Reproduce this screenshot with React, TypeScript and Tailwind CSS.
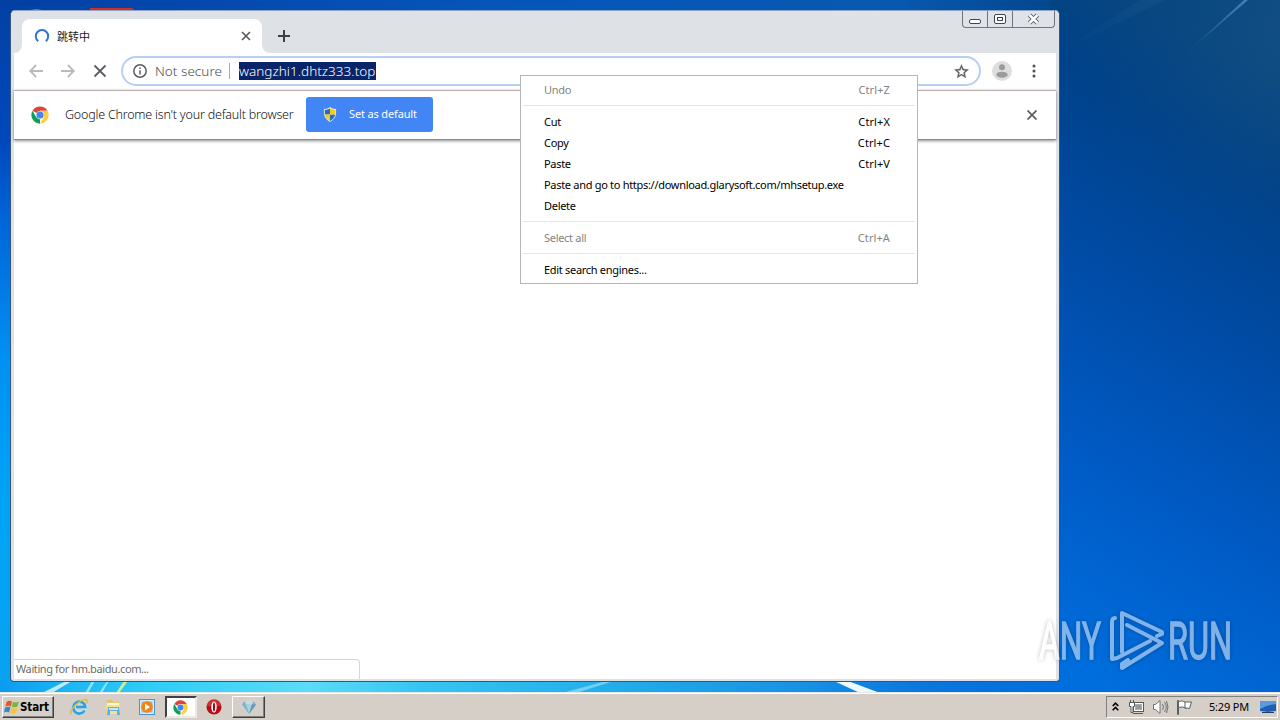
interface MenuEntry {
    label: string;
    shortcut?: string;
    disabled?: boolean;
}

const menuGroups: MenuEntry[][] = [
    [{ label: 'Undo', shortcut: 'Ctrl+Z', disabled: true }],
    [
        { label: 'Cut', shortcut: 'Ctrl+X' },
        { label: 'Copy', shortcut: 'Ctrl+C' },
        { label: 'Paste', shortcut: 'Ctrl+V' },
        { label: 'Paste and go to https://download.glarysoft.com/mhsetup.exe' },
        { label: 'Delete' },
    ],
    [{ label: 'Select all', shortcut: 'Ctrl+A', disabled: true }],
    [{ label: 'Edit search engines...' }],
];

function ChromeLogo({ className }: { className?: string }) {
    return (
        <svg viewBox="0 0 48 48" className={className}>
            <circle cx="24" cy="24" r="23" fill="#fff" />
            <path d="M24 24 4.1 12.5A23 23 0 0 1 43.9 12.5H24Z" fill="#db4437" />
            <path d="M4.1 12.5 14 29.8 24 35.5 24 47A23 23 0 0 1 4.1 12.5Z" fill="#0f9d58" />
            <path d="M43.9 12.5A23 23 0 0 1 24 47L34 29.8 24 12.5Z" fill="#ffcd40" />
            <circle cx="24" cy="24" r="11" fill="#f1f1f1" />
            <circle cx="24" cy="24" r="9.5" fill="#4285f4" />
        </svg>
    );
}

function Wallpaper() {
    return (
        <svg
            viewBox="0 0 1280 720"
            className="absolute inset-0 h-full w-full"
            preserveAspectRatio="none"
        >
            <defs>
                <linearGradient id="left" x1="0" y1="0" x2="0" y2="1">
                    <stop offset="0" stopColor="#0340a4" />
                    <stop offset="0.2" stopColor="#0049bd" />
                    <stop offset="0.32" stopColor="#0068dc" />
                    <stop offset="0.5" stopColor="#0091f2" />
                    <stop offset="0.7" stopColor="#00a4f5" />
                    <stop offset="1" stopColor="#0aa2ee" />
                </linearGradient>
                <linearGradient id="top" x1="0" y1="0" x2="1" y2="0">
                    <stop offset="0" stopColor="#0340a4" />
                    <stop offset="0.4" stopColor="#0556bc" />
                    <stop offset="0.7" stopColor="#0759b0" />
                    <stop offset="0.82" stopColor="#03478f" />
                    <stop offset="1" stopColor="#0c4885" />
                </linearGradient>
                <linearGradient id="right" x1="1060" y1="660" x2="1370" y2="140" gradientUnits="userSpaceOnUse">
                    <stop offset="0" stopColor="#006edd" />
                    <stop offset="0.3" stopColor="#005bc6" />
                    <stop offset="0.6" stopColor="#004ba5" />
                    <stop offset="0.85" stopColor="#00428a" />
                    <stop offset="1" stopColor="#06457f" />
                </linearGradient>
                <radialGradient id="glow" cx="1300" cy="30" r="230" gradientUnits="userSpaceOnUse">
                    <stop offset="0" stopColor="#1c5685" stopOpacity="0.6" />
                    <stop offset="1" stopColor="#0c4885" stopOpacity="0" />
                </radialGradient>
                <linearGradient id="bottom" x1="0" y1="0" x2="1" y2="0">
                    <stop offset="0" stopColor="#0a9cf0" />
                    <stop offset="0.06" stopColor="#1cb4f4" />
                    <stop offset="0.14" stopColor="#2ecdf6" />
                    <stop offset="0.29" stopColor="#5bdcf8" />
                    <stop offset="0.4" stopColor="#35c4f2" />
                    <stop offset="0.58" stopColor="#22adea" />
                    <stop offset="0.76" stopColor="#1791e4" />
                    <stop offset="0.86" stopColor="#0b78df" />
                    <stop offset="1" stopColor="#006edd" />
                </linearGradient>
                <linearGradient id="ray" x1="0" y1="1" x2="1" y2="0">
                    <stop offset="0" stopColor="#6aa3d8" stopOpacity="0" />
                    <stop offset="1" stopColor="#6aa3d8" stopOpacity="0.6" />
                </linearGradient>
            </defs>
            <rect width="1280" height="720" fill="url(#top)" />
            <rect y="0" width="40" height="720" fill="url(#left)" />
            <rect x="1050" y="0" width="230" height="720" fill="url(#right)" />
            <rect x="1050" y="0" width="230" height="300" fill="url(#glow)" />
            <path d="M1183 56 1244 0H1248Z" fill="url(#ray)" />
            <path d="M1060 52 1140 0H1165Z" fill="url(#ray)" opacity="0.12" />
            <rect y="680" width="1060" height="14" fill="url(#bottom)" />
            <path d="M42 693 66 681H72L52 693Z" fill="#d9f4ff" opacity="0.85" />
            <path d="M85 693 92 681H95L88 693ZM99 693 107 681H109L102 693Z" fill="#8fe2ff" />
            <path d="M116 693 124 681H128L119 693Z" fill="#c9f08f" />
            <path d="M562 693 606 681H614L576 693Z" fill="#bdefff" opacity="0.5" />
            <path d="M834 681H848L880 693H860Z" fill="#ecfaff" />
            <path d="M24 11Q36 8 49 11Z" fill="#aec3e5" />
            <path d="M90 8H132L134 10V12H90Z" fill="#d22c2b" />
        </svg>
    );
}

function WindowControls() {
    return (
        <div className="flex h-[17px] w-[93px] overflow-hidden rounded-b-[4px] border border-t-0 border-[#70757d] bg-[#e0e2e9]">
            <div className="w-[25px] border-r border-[#70757d]">
                <svg viewBox="0 0 24 16" className="h-4 w-6" fill="#fff" stroke="#41444f">
                    <rect x="6.5" y="8.5" width="11" height="4" rx="1.5" />
                </svg>
            </div>
            <div className="w-[25px] border-r border-[#70757d]">
                <svg viewBox="0 0 24 16" className="h-4 w-6" fill="#fff" stroke="#41444f">
                    <rect x="6.5" y="3.5" width="11" height="9" rx="1.5" />
                    <rect x="9.5" y="6.5" width="5" height="3" />
                </svg>
            </div>
            <div className="flex-1">
                <svg viewBox="0 0 41 16" className="h-4 w-[41px]" fill="none">
                    <path d="m16.5 4 8 8m0-8-8 8" stroke="#50535e" strokeWidth="4.4" />
                    <path d="m16.5 4 8 8m0-8-8 8" stroke="#fff" strokeWidth="2.6" />
                </svg>
            </div>
        </div>
    );
}

function TabStrip() {
    return (
        <div className="flex h-[42px] items-end bg-[#dee1e6] pl-[3px]">
            <svg viewBox="0 0 8 8" className="h-2 w-2 fill-white">
                <path d="M8 0V8H0A8 8 0 0 0 8 0Z" />
            </svg>
            <div className="flex h-[34px] w-[240px] items-center rounded-t-lg bg-white pr-[11px] pl-3">
                <svg viewBox="0 0 16 16" className="h-4 w-4" fill="none">
                    <path d="M4.2 13.1A6.2 6.2 0 1 1 11.8 13.1" stroke="#2b76d2" strokeWidth="2" />
                </svg>
                <span className="ml-[7px] flex-1 font-['Noto_Sans_CJK_SC',sans-serif] text-[11px] text-[#222]">
                    跳转中
                </span>
                <svg viewBox="0 0 10 10" className="h-[10px] w-[10px]" fill="none">
                    <path d="m1 1 8 8m0-8-8 8" stroke="#5a5d61" strokeWidth="1.7" />
                </svg>
            </div>
            <svg viewBox="0 0 8 8" className="h-2 w-2 fill-white">
                <path d="M0 0V8H8A8 8 0 0 1 0 0Z" />
            </svg>
            <svg viewBox="0 0 12 12" className="mb-[11px] ml-2 h-3 w-3" fill="none">
                <path d="M6 0V12M0 6H12" stroke="#3c4043" strokeWidth="2" />
            </svg>
            <div className="ml-auto self-start pr-1">
                <WindowControls />
            </div>
        </div>
    );
}

function Toolbar() {
    return (
        <div className="flex h-[37px] items-center bg-white pr-[17px] pb-px pl-[15px]">
            <div className="flex gap-[18px]">
                <svg viewBox="0 0 14 14" className="h-[14px] w-[14px]" fill="none" stroke="#b8babd" strokeWidth="1.8">
                    <path d="M14 7H1.5M7.2 1 1.2 7l6 6" />
                </svg>
                <svg viewBox="0 0 14 14" className="h-[14px] w-[14px]" fill="none" stroke="#b8babd" strokeWidth="1.8">
                    <path d="M0 7H12.5M6.8 1l6 6-6 6" />
                </svg>
                <svg viewBox="0 0 14 14" className="h-[14px] w-[14px]" fill="none" stroke="#5a5d61" strokeWidth="1.8">
                    <path d="m1.5 1.5 11 11m0-11-11 11" />
                </svg>
            </div>
            <div className="ml-[14px] flex h-[30px] w-[860px] items-center rounded-full border-2 border-[#b9cef3] bg-white pr-[9px] pl-[10px] text-[13.5px]">
                <svg viewBox="0 0 14 14" className="h-[14px] w-[14px]" fill="none" stroke="#5a5d61">
                    <circle cx="7" cy="7" r="6.2" strokeWidth="1.5" />
                    <path d="M7 6.2V10.5M7 3.4V5" strokeWidth="1.5" />
                </svg>
                <span className="ml-2 w-[68px] font-light tracking-[0.03px] whitespace-nowrap text-[#4b4e52]">
                    Not secure
                </span>
                <span className="ml-[6px] h-4 w-px bg-[#a6a9ae]" />
                <span className="ml-[9px] h-[18px] w-[137px] bg-[#0a246a] leading-[18px] font-light tracking-[0.03px] text-white">
                    wangzhi1.dhtz333.top
                </span>
                <svg viewBox="0 0 24 24" className="ml-auto h-[17px] w-[17px] fill-[#5a5d61]">
                    <path
                        d="m22 9.24-7.19-.62L12 2 9.19 8.63 2 9.24l5.46 4.73L5.82 21 12 17.27 18.18 21l-1.63-7.03L22 9.24ZM12 15.4l-3.76 2.27 1-4.28-3.32-2.88 4.38-.38L12 6.1l1.71 4.04 4.38.38-3.32 2.88 1 4.28L12 15.4Z"
                        stroke="#5a5d61"
                        strokeWidth="0.4"
                    />
                </svg>
            </div>
            <svg viewBox="0 0 20 20" className="ml-[11px] h-5 w-5">
                <circle cx="10" cy="10" r="10" fill="#dedede" />
                <circle cx="10" cy="6.3" r="3" fill="#9b9b9b" />
                <ellipse cx="10" cy="13.7" rx="5.7" ry="3" fill="#9b9b9b" />
            </svg>
            <svg viewBox="0 0 4 14" className="ml-5 h-[14px] w-1 fill-[#4e5154]">
                <circle cx="2" cy="2" r="1.5" />
                <circle cx="2" cy="7" r="1.5" />
                <circle cx="2" cy="12" r="1.5" />
            </svg>
        </div>
    );
}

function InfoBar() {
    return (
        <div className="flex h-[50px] items-center border-t border-b border-t-[#b6aeac] border-b-[#8b8b8b] bg-white pr-[19px] pb-px pl-[17px] shadow-[0_1px_3px_rgba(0,0,0,0.45)]">
            <ChromeLogo className="h-[18px] w-[18px]" />
            <span className="mt-px ml-[16px] w-[230px] text-[12.5px] font-light tracking-[-0.21px] whitespace-nowrap text-[#111]">
                Google Chrome isn't your default browser
            </span>
            <button className="ml-[11px] flex h-[35px] w-[127px] items-center rounded-[3px] bg-[#4285f4] pl-[17px] text-[11px] text-white">
                <svg viewBox="0 0 14 16" className="h-[15px] w-[14px]">
                    <path d="M7 0Q9 2 13.5 2.2V7Q13 13 7 16 1 13 .5 7V2.2Q5 2 7 0Z" fill="#e9e5ce" />
                    <path d="M7 1.5V8H1.5V3.2Q5 3 7 1.5ZM7 8h5.5Q11.5 12.5 7 14.8Z" fill="#1f6fc2" />
                    <path d="M7 1.5Q9 3 12.5 3.2V8H7ZM1.5 8H7v6.8Q2.5 12.5 1.5 8Z" fill="#fcc71f" />
                </svg>
                <span className="ml-3 tracking-[-0.15px] whitespace-nowrap">Set as default</span>
            </button>
            <svg viewBox="0 0 10 10" className="ml-auto h-[10px] w-[10px]" fill="none">
                <path d="m.5.5 9 9m0-9-9 9" stroke="#5f6266" strokeWidth="1.8" />
            </svg>
        </div>
    );
}

function ContextMenu() {
    return (
        <div className="absolute top-[75px] left-[520px] h-[209px] w-[398px] border border-[#b4b6b9] bg-white pt-1 text-[11px] text-black">
            {menuGroups.map((group, i) => (
                <div
                    key={i}
                    className="mx-[2px] mb-[6px] border-b border-[#e6e6e6] pb-[4px] last:border-b-0"
                >
                    {group.map((item) => (
                        <div
                            key={item.label}
                            className={`flex h-[21px] items-center justify-between pr-[25px] pl-[21px] whitespace-nowrap ${
                                item.disabled ? 'text-[#838383]' : ''
                            }`}
                        >
                            <span className="tracking-[-0.3px]">{item.label}</span>
                            <span className="tracking-[0.1px]">{item.shortcut}</span>
                        </div>
                    ))}
                </div>
            ))}
        </div>
    );
}

function BrowserWindow() {
    return (
        <div className="absolute top-[10px] left-[10px] flex h-[672px] w-[1050px] flex-col rounded-t-[5px] rounded-b-[4px] border border-[#35577c] border-t-[#8fa5c4] bg-[#dee1e6]">
            <div className="overflow-hidden rounded-t-[4px]">
                <TabStrip />
            </div>
            <div className="mx-[3px] mb-[2px] flex flex-1 flex-col bg-white">
                <Toolbar />
                <InfoBar />
                <div className="mt-auto flex h-5 w-[346px] items-center rounded-tr-[4px] border-t border-r border-[#d5d6d9] pl-[2px] text-[11px] tracking-[-0.4px] text-[#6b6b6b]">
                    <span>Waiting for hm.baidu.com...</span>
                </div>
            </div>
        </div>
    );
}

function Watermark() {
    return (
        <div className="absolute top-[608px] left-[1038px] flex h-[66px] w-[242px] items-center text-white opacity-50 drop-shadow-[0_0_2px_rgba(0,0,0,0.5)]">
            <svg viewBox="0 0 242 66" className="h-full w-full overflow-visible">
                <g
                    fill="currentColor"
                    stroke="currentColor"
                    strokeWidth="1.3"
                    fontFamily="Roboto, sans-serif"
                    fontSize="51"
                >
                    <text x="1" y="51" textLength="62" lengthAdjust="spacingAndGlyphs">
                        ANY
                    </text>
                    <text x="130" y="51" textLength="64" lengthAdjust="spacingAndGlyphs">
                        RUN
                    </text>
                </g>
                {/* Two interlocking play triangles */}
                <g fill="none" stroke="currentColor" strokeWidth="4" strokeLinejoin="round" strokeLinecap="round">
                    <path d="M77 10Q74 10 74 14V51L79 50 112 33" />
                    <path d="M84 44V5L124 24V26L119 28" />
                    <path d="M89 17 124 35 84 60V56L90 52" />
                </g>
            </svg>
        </div>
    );
}

function StartButton() {
    return (
        <button className="flex h-[22px] w-[52px] items-center border border-t-white border-r-[#404040] border-b-[#404040] border-l-white pl-px shadow-[inset_-1px_-1px_0_#808080]">
            <svg viewBox="0 0 16 16" className="h-4 w-4">
                <path d="M2.5 3Q5 1 8 2.5L6.8 7.5Q4 6 1.3 7.8Z" fill="#e7562a" />
                <path d="M9 2.8Q12 4.2 15 2.5L13.5 7.5Q10.5 9 7.8 7.8Z" fill="#73b843" />
                <path d="M1 8.8Q4 7 6.5 8.5L5 13.5Q2.5 12 0 13.5Z" fill="#3d82d2" />
                <path d="M7.5 8.9Q10.5 10.2 13.2 8.7L12 13.5Q9 15.5 6.2 13.8Z" fill="#f6c530" />
            </svg>
            <span className="mt-px font-['DejaVu_Sans_Condensed','DejaVu_Sans',sans-serif] text-[11.5px] font-bold tracking-[-0.1px] text-black">
                Start
            </span>
        </button>
    );
}

function Taskbar() {
    return (
        <div className="absolute inset-x-0 bottom-0 flex h-7 items-center border-t border-[#e9e7e4] bg-[#d5cfc8] pt-[3px] pb-[2px] pl-[2px] shadow-[inset_0_1px_0_#fff]">
            <StartButton />
            {/* Internet Explorer */}
            <svg viewBox="0 0 18 18" className="ml-4 h-[18px] w-[18px]" fill="none">
                <circle cx="9.5" cy="9.5" r="5.5" stroke="#b3e4fa" strokeWidth="4.5" />
                <path d="M14.5 12.5A6 6 0 1 1 15.2 9H6" stroke="#369fda" strokeWidth="2.6" />
                <path d="M1.2 16.2Q-.5 13 5 7.5 12 1 16 1.5 18 2.5 16.5 5.5" stroke="#e2b83b" strokeWidth="1.4" />
            </svg>
            {/* Explorer folder */}
            <svg viewBox="0 0 18 18" className="ml-4 h-[18px] w-[18px]">
                <path d="M3 2h5l1 2h6v12H2Z" fill="#e2c56b" />
                <path d="M3 5h12v3H3Z" fill="#fff8cf" />
                <path d="M2 7h14l-.5 9H2.5Z" fill="#f5df93" />
                <path d="M4 9h11l1 8h-3v-4H6v4H3Z" fill="#5fb0dc" />
                <path d="M5 10h9v2H5Z" fill="#c2e8f7" />
            </svg>
            {/* Media player */}
            <svg viewBox="0 0 16 16" className="ml-[17px] h-4 w-4">
                <rect x=".5" y=".5" width="15" height="15" fill="#d9edfa" stroke="#4b94c9" />
                <rect x="2.5" y="2.5" width="11" height="11" fill="#87bde5" />
                <circle cx="8" cy="8" r="5.8" fill="#f58213" />
                <path d="m6 4.5 5 3.5-5 3.5Z" fill="#fff" />
            </svg>
            <div className="ml-[10px] flex h-[22px] w-8 items-center justify-center border-2 border-t-[#404040] border-r-[#eceae6] border-b-[#eceae6] border-l-[#404040] bg-white">
                <ChromeLogo className="mr-px h-[15px] w-[15px]" />
            </div>
            {/* Opera */}
            <svg viewBox="0 0 16 16" className="ml-[9px] h-4 w-4">
                <circle cx="8" cy="8" r="7.5" fill="#b40f18" />
                <path d="M1 7A7 7 0 0 1 15 7Z" fill="#d64b4b" opacity="0.6" />
                <ellipse cx="8" cy="8" rx="2.7" ry="5.6" fill="#fff" />
                <ellipse cx="8" cy="8" rx="1.1" ry="4.6" fill="#9a0a12" />
            </svg>
            <div className="ml-[10px] flex h-[22px] w-[33px] items-center justify-center border border-t-white border-r-[#404040] border-b-[#404040] border-l-white shadow-[inset_-1px_-1px_0_#808080]">
                <svg viewBox="0 0 14 14" className="h-[14px] w-[14px]">
                    <path d="M2.5 1h9L14 4.5 7 14 0 4.5Z" fill="#83b4c9" />
                    <path d="M4 4.5h6L7 14Z" fill="#a9d2e0" />
                    <path d="M2.5 1 4 4.5h6L11.5 1Z" fill="#bfdde7" />
                    <path d="M10 4.5H14L7 14Z" fill="#6097b2" />
                </svg>
            </div>
            <div className="mr-[2px] ml-auto flex h-[22px] w-[172px] items-center border border-t-[#808080] border-r-white border-b-white border-l-[#808080] pr-px pl-[5px]">
                <svg viewBox="0 0 7 9" className="mb-[2px] h-[9px] w-[7px]" fill="none" stroke="#000" strokeWidth="1.6">
                    <path d="M.7 4 3.5 1.2 6.3 4M.7 8.3 3.5 5.5 6.3 8.3" />
                </svg>
                {/* Network */}
                <svg viewBox="0 0 17 16" className="ml-[9px] h-4 w-[17px]" stroke="#55585c">
                    <rect x="5.5" y="3.5" width="10" height="9" fill="#fff" />
                    <rect x="7.5" y="5.5" width="6" height="5" fill="#999" stroke="#aaa" />
                    <path d="M5 14.5H15" fill="none" />
                    <path d="M1.5 3.5h5v4h-1.5v6h-2v-6h-1.5ZM2.5 1v2M5.5 1v2" fill="#fff" />
                </svg>
                {/* Volume */}
                <svg viewBox="0 0 17 16" className="ml-[7px] h-4 w-[17px]" stroke="#6f7276">
                    <path d="M1.5 5.5h2l4.5-4v13l-4.5-4h-2Z" fill="#fff" />
                    <path d="M10.5 5q2 3 0 6M12.5 3q3.5 5 0 10M14.5 2q3 6 0 12" fill="none" />
                </svg>
                {/* Action centre flag */}
                <svg viewBox="0 0 17 16" className="ml-[7px] h-4 w-[17px]" stroke="#5c5f63">
                    <path d="M1.5 1.5h1v14h-1Z" fill="#fff" />
                    <path d="M2.5 2.5Q6 1 9.5 3H15.5L13.5 9.5Q11 8.5 9 9.5V8.5Q6 7.5 2.5 8.5Z" fill="#fff" />
                    <path d="M9 3v6" />
                </svg>
                <span className="ml-4 w-10 text-[11px] tracking-[-0.2px] whitespace-nowrap text-black">
                    5:29 PM
                </span>
                <svg viewBox="0 0 16 14" className="ml-auto h-[14px] w-4">
                    <path d="M0 1H16V11L8 12 0 11Z" fill="#1e5fb4" />
                    <path d="M0 1H16V4Q7 5 0 9Z" fill="#5b9bdc" />
                    <path d="M2 12.5H14" stroke="#233c66" />
                </svg>
            </div>
        </div>
    );
}

export default function App() {
    return (
        <div className="relative h-[720px] w-[1280px] overflow-hidden bg-[#0056b8] font-['Noto_Sans',sans-serif]">
            <Wallpaper />
            <BrowserWindow />
            <ContextMenu />
            <Watermark />
            <Taskbar />
        </div>
    );
}
